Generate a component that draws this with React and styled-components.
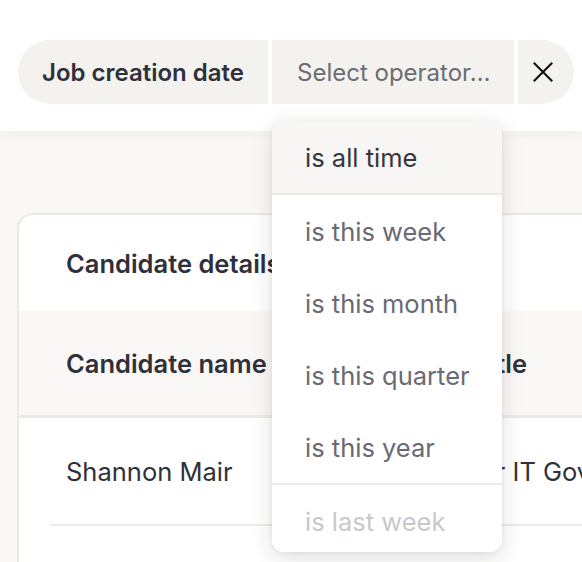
import React from "react";
import styled, { createGlobalStyle } from "styled-components";

const GlobalStyle = createGlobalStyle`
  html, body {
    margin: 0;
    padding: 0;
    background: #faf8f6;
    overflow: hidden;
  }
  body {
    font-family: Inter, "Noto Sans", Lato, sans-serif;
    color: #2f2f37;
  }
  * { box-sizing: border-box; }
`;

const Page = styled.div`
  position: relative;
  width: 582px;
  height: 562px;
  overflow: hidden;
  display: flex;
  flex-direction: column;
`;

const TopBar = styled.header`
  position: relative;
  z-index: 2;
  height: 131px;
  flex: none;
  background: #ffffff;
  padding: 40px 0 0 18px;
  box-shadow: 0 3px 10px rgba(60, 40, 20, 0.05);
`;

const FilterGroup = styled.div`
  display: flex;
  gap: 4px;
  height: 64px;
`;

const Segment = styled.div`
  display: flex;
  align-items: center;
  height: 64px;
  background: #f3f2ef;
  font-size: 24px;
  font-weight: ${(p) => (p.$strong ? 600 : 400)};
  color: ${(p) => (p.$muted ? "#6c6c73" : "#30303a")};
  padding: 0 ${(p) => p.$padR ?? 24}px 0 ${(p) => p.$padL ?? 24}px;
  width: ${(p) => p.$w}px;
  border-radius: ${(p) =>
    p.$first ? "32px 0 0 32px" : p.$last ? "0 32px 32px 0" : "0"};
  white-space: nowrap;
  overflow: hidden;
`;

const Dropdown = styled.div`
  position: absolute;
  z-index: 3;
  left: 272px;
  top: 121px;
  width: 230px;
  height: 431px;
  background: #ffffff;
  border-radius: 12px;
  overflow: hidden;
  box-shadow: 0 6px 22px rgba(40, 30, 20, 0.14), 0 1px 4px rgba(40, 30, 20, 0.06);
`;

const OptionGroup = styled.div`
  border-bottom: 2px solid #ecebe6;
`;

const Option = styled.div`
  height: 72px;
  display: flex;
  align-items: center;
  padding-left: 33px;
  font-size: 25.5px;
  white-space: nowrap;
  background: ${(p) => (p.$active ? "#f7f6f4" : "#ffffff")};
  color: ${(p) => (p.$active ? "#35353d" : p.$faded ? "#c9c8cb" : "#6a6a72")};
`;

const Content = styled.main`
  flex: 1;
  display: flex;
  flex-direction: column;
  padding: 82px 0 0 17px;
`;

const Card = styled.section`
  flex: 1;
  width: 720px;
  background: #ffffff;
  border: 2px solid #ebe9e4;
  border-right: none;
  border-bottom: none;
  border-radius: 16px 0 0 0;
`;

const CardTitle = styled.div`
  height: 96px;
  display: flex;
  align-items: center;
  padding-left: 47px;
  font-size: 25.5px;
  font-weight: 600;
  color: #30303a;
  white-space: nowrap;
`;

const Row = styled.div`
  display: grid;
  grid-template-columns: 362px 1fr;
  align-items: center;
  height: ${(p) => (p.$head ? 107 : 106)}px;
  padding-left: 47px;
  background: ${(p) => (p.$head ? "#faf8f6" : "#ffffff")};
  border-bottom: ${(p) => (p.$head ? "3px solid #eeebe6" : "none")};
  font-size: 25.5px;
  font-weight: ${(p) => (p.$head ? 600 : 400)};
  color: #30303a;
  white-space: nowrap;
`;

const Divider = styled.div`
  height: 2px;
  margin-left: 31px;
  background: #edebe6;
`;

const CloseIcon = () => (
  <svg width="20" height="20" viewBox="0 0 20 20" fill="none">
    <path d="M1.5 1.5 L18.5 18.5 M18.5 1.5 L1.5 18.5" stroke="#111" strokeWidth="2.1" strokeLinecap="square" />
  </svg>
);

const groups = [
  [{ label: "is all time", active: true }],
  [
    { label: "is this week" },
    { label: "is this month" },
    { label: "is this quarter" },
    { label: "is this year" },
  ],
  [{ label: "is last week", faded: true }, { label: "is last month", faded: true }],
];

export default function App() {
  return (
    <>
      <GlobalStyle />
      <Page>
        <TopBar>
          <FilterGroup>
            <Segment $first $strong $w={250}>Job creation date</Segment>
            <Segment $muted $w={242} $padL={25}>Select operator…</Segment>
            <Segment $last $w={56} $padL={15} $padR={0}>
              <CloseIcon />
            </Segment>
          </FilterGroup>
        </TopBar>
        <Dropdown>
          {groups.map((g, i) => (
            <OptionGroup key={i}>
              {g.map((o) => (
                <Option key={o.label} $active={o.active} $faded={o.faded}>
                  {o.label}
                </Option>
              ))}
            </OptionGroup>
          ))}
        </Dropdown>
        <Content>
          <Card>
            <CardTitle>Candidate details</CardTitle>
            <Row $head>
              <span>Candidate name</span>
              <span>Job title</span>
            </Row>
            <Row>
              <span>Shannon Mair</span>
              <span>Senior IT Governance Lead</span>
            </Row>
            <Divider />
          </Card>
        </Content>
      </Page>
    </>
  );
}
